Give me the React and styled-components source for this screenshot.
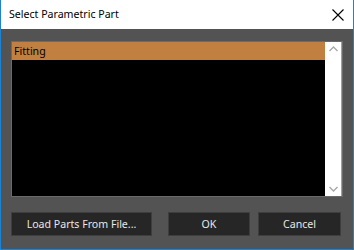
import React from 'react'
import styled, { createGlobalStyle } from 'styled-components'

const Global = createGlobalStyle`
  html, body { margin: 0; padding: 0; background: #ffffff; }
  * { box-sizing: border-box; }
`

const Window = styled.div`
  width: 354px;
  height: 250px;
  border: 1px solid #1883d7;
  border-top: none;
  display: flex;
  flex-direction: column;
  font-family: "Noto Sans", "Open Sans", sans-serif;
`

const TitleBar = styled.div`
  height: 29px;
  background: #ffffff;
  display: flex;
  align-items: center;
  justify-content: space-between;
  padding: 0 8px 1px 8px;
  font-size: 10.6px;
  color: #000000;
`

const Close = styled.svg`
  width: 12px;
  height: 12px;
  margin-right: 1px;
  margin-top: 1px;
`

const Body = styled.div`
  flex: 1;
  background: #535353;
  display: flex;
  flex-direction: column;
  padding: 12px 10px 13px 10px;
  gap: 15px;
`

const ListBox = styled.div`
  flex: 1;
  display: flex;
  background: #000000;
  border: 1px solid #6a6a6a;
`

const Items = styled.div`
  flex: 1;
  display: flex;
  flex-direction: column;
`

const Item = styled.div`
  height: 18px;
  line-height: 18px;
  padding-left: 2px;
  font-size: 10.6px;
  color: ${p => (p.selected ? '#000000' : '#ffffff')};
  background: ${p => (p.selected ? '#c1803f' : 'transparent')};
`

const Scroll = styled.div`
  width: 17px;
  background: #ffffff;
  border-right: 1px solid #a0a0a0;
  display: flex;
  flex-direction: column;
  justify-content: space-between;
  align-items: center;
  padding: 4px 0;
`

const Arrow = styled.svg`
  width: 9px;
  height: 6px;
`

const Buttons = styled.div`
  height: 24px;
  display: flex;
`

const Button = styled.button`
  width: ${p => p.w}px;
  height: 24px;
  margin-left: ${p => p.ml || 0}px;
  background: #262626;
  border: 1px solid #3e3e3e;
  color: #e8e8e8;
  font-family: "Noto Sans", "Open Sans", sans-serif;
  font-size: 10.6px;
  padding: 0;
`

export default function App() {
  return (
    <>
      <Global />
      <Window>
        <TitleBar>
          <span>Select Parametric Part</span>
          <Close viewBox="0 0 12 12">
            <path d="M0.5 0.5 L11.5 11.5 M11.5 0.5 L0.5 11.5" stroke="#000" strokeWidth="1.1" />
          </Close>
        </TitleBar>
        <Body>
          <ListBox>
            <Items>
              <Item selected>Fitting</Item>
            </Items>
            <Scroll>
              <Arrow viewBox="0 0 9 6">
                <path d="M0.5 5 L4.5 1 L8.5 5" fill="none" stroke="#a8a8a8" strokeWidth="1.4" />
              </Arrow>
              <Arrow viewBox="0 0 9 6">
                <path d="M0.5 1 L4.5 5 L8.5 1" fill="none" stroke="#a8a8a8" strokeWidth="1.4" />
              </Arrow>
            </Scroll>
          </ListBox>
          <Buttons>
            <Button w={141}>Load Parts From File...</Button>
            <Button w={82} ml={16}>OK</Button>
            <Button w={83} ml={8}>Cancel</Button>
          </Buttons>
        </Body>
      </Window>
    </>
  )
}
